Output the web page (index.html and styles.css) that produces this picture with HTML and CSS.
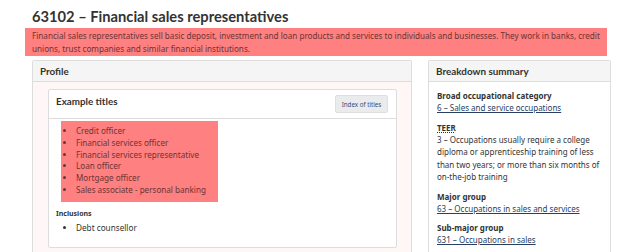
FILE: index.html
```html
<!DOCTYPE html>
<html lang="en">
<head>
    <meta charset="UTF-8">
    <meta name="viewport" content="width=device-width, initial-scale=1.0">
    <title>63102 – Financial sales representatives</title>

    <link rel="stylesheet" href="styles.css">

</head>
<body>
    <main class="page">
        <h1 class="pageTitle">63102 – Financial sales representatives</h1>
        <p class="lead">Financial sales representatives sell basic deposit, investment and loan products and services to individuals and businesses. They work in banks, credit unions, trust companies and similar financial institutions.</p>

        <div class="layout">
            <section class="panel profile">
                <header class="panelHeading">
                    <h2 class="panelTitle">Profile</h2>
                </header>
                <div class="panelBody profileBody">
                    <section class="panel inner">
                        <header class="innerHeading">
                            <h3 class="innerTitle">Example titles</h3>
                            <button type="button" class="btn">Index of titles</button>
                        </header>
                        <div class="innerBody">
                            <ul class="titles">
                                <li>Credit officer</li>
                                <li>Financial services officer</li>
                                <li>Financial services representative</li>
                                <li>Loan officer</li>
                                <li>Mortgage officer</li>
                                <li>Sales associate - personal banking</li>
                            </ul>
                            <h4 class="subTitle">Inclusions</h4>
                            <ul class="inclusions">
                                <li>Debt counsellor</li>
                            </ul>
                        </div>
                    </section>
                </div>
            </section>

            <aside class="panel summary">
                <header class="panelHeading">
                    <h2 class="panelTitle">Breakdown summary</h2>
                </header>
                <div class="panelBody summaryBody">
                    <dl>
                        <dt>Broad occupational category</dt>
                        <dd><a href="#">6 – Sales and service occupations</a></dd>
                        <dt><abbr title="Training, Education, Experience and Responsibilities">TEER</abbr></dt>
                        <dd>3 – Occupations usually require a college diploma or apprenticeship training of less than two years; or more than six months of on-the-job training</dd>
                        <dt>Major group</dt>
                        <dd><a href="#">63 – Occupations in sales and services</a></dd>
                        <dt>Sub-major group</dt>
                        <dd><a href="#">631 – Occupations in sales</a></dd>
                    </dl>
                </div>
            </aside>
        </div>
    </main>
</body>
</html>
```

FILE: styles.css
```css
body {
    margin: 0;
    overflow: hidden;
    font-family: "Noto Sans", "DejaVu Sans", sans-serif;
    color: #333;
    background: #fff;
}
.page {
    padding: 7px 0 0 25px;
}
.pageTitle {
    font-family: Lato, "Noto Sans", sans-serif;
    font-weight: 700;
    font-size: 14.7px;
    line-height: 18px;
    margin: 0 0 3px 7px;
}
.lead {
    width: 582px;
    box-sizing: border-box;
    margin: 0;
    padding: 1px 7px 1px;
    font-size: 8.15px;
    line-height: 13px;
    background: #ff8080;
    color: #6b3535;
}
.layout {
    display: flex;
    align-items: flex-start;
    gap: 16px;
    margin: 4px 0 0 7px;
}
.panel {
    border: 1px solid #ddd;
    border-radius: 2px;
    background: #fff;
}
.profile {
    width: 380px;
    box-sizing: border-box;
}
.summary {
    width: 183px;
    box-sizing: border-box;
}
.panelHeading {
    height: 20px;
    padding: 0 7px;
    background: #f5f5f5;
    border-bottom: 1px solid #ddd;
}
.panelTitle {
    margin: 0;
    font-family: Lato, "Noto Sans", sans-serif;
    font-weight: 700;
    font-size: 9.9px;
    line-height: 20px;
}
.profileBody {
    padding: 7px 14px 10px 15px;
    background: #fff7f6;
}
.innerHeading {
    display: flex;
    align-items: flex-start;
    justify-content: space-between;
    height: 28px;
    padding: 0 8px 0 7px;
    border-bottom: 1px solid #ddd;
}
.innerTitle {
    margin: 0;
    font-family: Lato, "Noto Sans", sans-serif;
    font-weight: 700;
    font-size: 9.8px;
    line-height: 22px;
}
.btn {
    margin-top: 5px;
    height: 18px;
    width: 53px;
    padding: 0;
    font-family: "Noto Sans", sans-serif;
    font-size: 6.2px;
    color: #335075;
    background: #eaebed;
    border: 1px solid #dcdee1;
    border-radius: 2px;
}
.innerBody {
    padding: 2px 7px 13px;
}
.titles {
    width: 157px;
    box-sizing: border-box;
    margin: 0 0 0 5px;
    padding: 4px 0 6px 15px;
    font-size: 8.1px;
    line-height: 11.8px;
    background: #ff8080;
    color: #6b3535;
}
.subTitle {
    margin: 6px 0 0;
    font-size: 7px;
    line-height: 11px;
}
.inclusions {
    margin: 3px 0 0;
    padding-left: 20px;
    font-size: 8.2px;
    line-height: 12px;
}
.summaryBody {
    padding: 7px 8px 10px;
}
.summaryBody dl {
    margin: 0;
}
.summaryBody dt {
    margin-top: 6px;
    font-weight: 700;
    font-size: 8px;
    line-height: 13px;
}
.summaryBody dt:first-child {
    margin-top: 0;
}
.summaryBody dd {
    margin: 0;
    font-size: 8px;
    line-height: 12.5px;
}
.summaryBody a {
    color: #284162;
}
abbr {
    text-decoration: underline dotted;
}
```
